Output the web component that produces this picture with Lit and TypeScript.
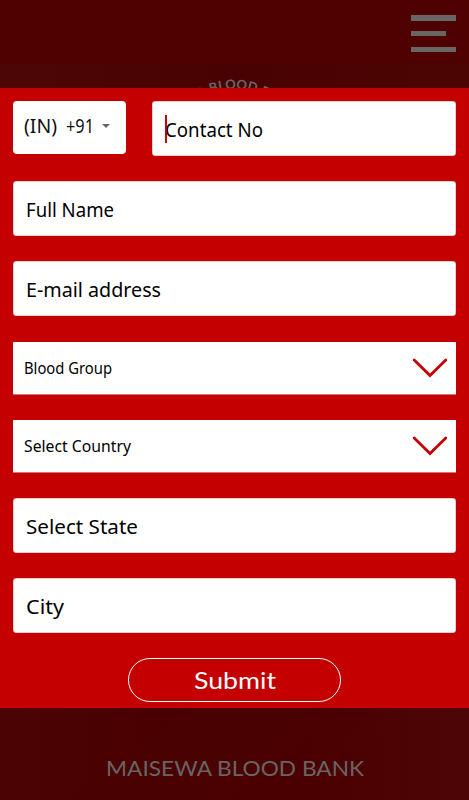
import { LitElement, html, css, svg } from "lit";
import { customElement, property } from "lit/decorators.js";

@customElement("fit-text")
class FitText extends LitElement {
  @property() text = "";
  @property({ type: Number }) width = 100;

  static styles = css`
    :host { display: block; flex: none; }
    svg { display: block; overflow: visible; height: 1.4em; }
    text { fill: currentColor; }
  `;

  render() {
    return html`<svg width=${this.width} role="img" aria-label=${this.text}>
      ${svg`<text x="0" y="1.06em" textLength=${this.width} lengthAdjust="spacingAndGlyphs">${this.text}</text>`}
    </svg>`;
  }
}

@customElement("form-field")
class FormField extends LitElement {
  @property() label = "";
  @property({ type: Number }) width = 100;
  @property({ type: Boolean, reflect: true }) select = false;
  @property({ type: Boolean, reflect: true }) active = false;

  static styles = css`
    :host {
      display: flex; align-items: center; box-sizing: border-box;
      height: 54.5px; padding: 2px 13px 0; border-radius: 4px;
      background: #fff; color: #000; font-size: 19.5px;
      box-shadow: inset 0 0 0 0.5px #d8a0a0;
      position: relative;
    }
    :host([select]) {
      height: 52px; padding: 0 9px 0 11px; border-radius: 0; font-size: 16px;
      justify-content: space-between; box-shadow: 0 0.7px 0 #e5a5a5;
    }
    .caret { position: absolute; left: 13px; top: 14px; width: 2px; height: 28px; background: #c50000; }
  `;

  render() {
    return html`
      ${this.active ? html`<span class="caret"></span>` : ""}
      <fit-text .text=${this.label} .width=${this.width}></fit-text>
      ${this.select
        ? html`<svg width="34" height="20" viewBox="0 0 34 20" fill="none">
            <path d="M1.2 2 L17 17.5 L32.8 2" stroke="#c50000" stroke-width="2.8" stroke-linecap="round" />
          </svg>`
        : ""}
    `;
  }
}

@customElement("app-root")
class AppRoot extends LitElement {
  static styles = css`
    :host {
      display: flex; flex-direction: column; height: 800px; overflow: hidden;
      background: #4b0202; font-family: "Noto Sans", sans-serif;
    }
    header {
      flex: none; box-sizing: border-box; height: 64px; padding: 15px 13px 0 0;
      display: flex; justify-content: flex-end; background: #4f0000;
      box-shadow: 0 1px 3px #360000;
    }
    .menu { display: flex; flex-direction: column; gap: 10.2px; width: 45px; }
    .menu i { height: 5.6px; background: #696565; }
    .menu i:nth-child(2) { width: 35px; }
    .emblem { flex: none; height: 24.3px; overflow: hidden; display: flex; justify-content: center; background: linear-gradient(90deg, #4d0606, #490202 50%, #4b0502); }
    .emblem svg { flex: none; display: block; }
    .panel {
      flex: none; box-sizing: border-box; height: 619.7px; padding: 13px 13px 0;
      display: flex; flex-direction: column; background: #c50000;
    }
    .phone { display: flex; gap: 26px; margin-bottom: 25.5px; }
    .phone form-field { flex: 1; }
    .code {
      box-sizing: border-box; width: 113px; height: 53px; border-radius: 4px; background: #fff;
      display: flex; align-items: center; padding: 0 16px 3px 11px; font-size: 19px; color: #111;
    }
    .dial { margin-left: 9px; }
    .arrow { margin-left: auto; border: 4px solid transparent; border-top-color: #666; border-bottom: 0; }
    .name { margin-bottom: 25.6px; }
    .mail { margin-bottom: 26.1px; }
    .blood { margin-bottom: 26px; }
    .country { margin-bottom: 26.3px; }
    .state { margin-bottom: 25.5px; }
    .submit {
      align-self: center; box-sizing: border-box; width: 213px; height: 44px; margin-top: 25px;
      display: flex; align-items: center; justify-content: center;
      border: 1.5px solid #fff; border-radius: 22px; background: none; padding: 2px 0 0;
      color: #fff; font-family: Lato, sans-serif; font-size: 24px;
    }
    footer {
      flex: 1; display: flex; justify-content: center; padding-top: 46px; color: #696565;
      font-family: Lato, sans-serif; font-size: 20.5px;
      background:
        linear-gradient(142deg, transparent 32%, #4a0101 32.5%, #4a0101 50%, transparent 70%),
        linear-gradient(90deg, #4b0303, #4a0000 35%, #4b0000 65%, #4d0505);
    }
  `;

  render() {
    return html`
      <header><div class="menu"><i></i><i></i><i></i></div></header>
      <div class="emblem">
        <svg width="110" height="25" viewBox="180 64 110 25">
          <path id="arc" d="M166 157 A68 68 0 0 1 302 157" fill="none" />
          <text fill="#696565" font-family="Lato, sans-serif" font-weight="700" font-size="13" text-anchor="middle">
            <textPath href="#arc" startOffset="50%" textLength="72">A BLOOD D</textPath>
          </text>
        </svg>
      </div>
      <main class="panel">
        <div class="phone">
          <div class="code">
            <fit-text .text=${"(IN)"} .width=${33}></fit-text>
            <fit-text class="dial" .text=${"+91"} .width=${28}></fit-text>
            <span class="arrow"></span>
          </div>
          <form-field active label="Contact No" width="98"></form-field>
        </div>
        <form-field class="name" label="Full Name" width="88"></form-field>
        <form-field class="mail" label="E-mail address" width="135"></form-field>
        <form-field class="blood" select label="Blood Group" width="88"></form-field>
        <form-field class="country" select label="Select Country" width="107"></form-field>
        <form-field class="state" label="Select State" width="112"></form-field>
        <form-field class="city" label="City" width="38"></form-field>
        <button class="submit"><fit-text .text=${"Submit"} .width=${82}></fit-text></button>
      </main>
      <footer><fit-text .text=${"MAISEWA BLOOD BANK"} .width=${258}></fit-text></footer>
    `;
  }
}
